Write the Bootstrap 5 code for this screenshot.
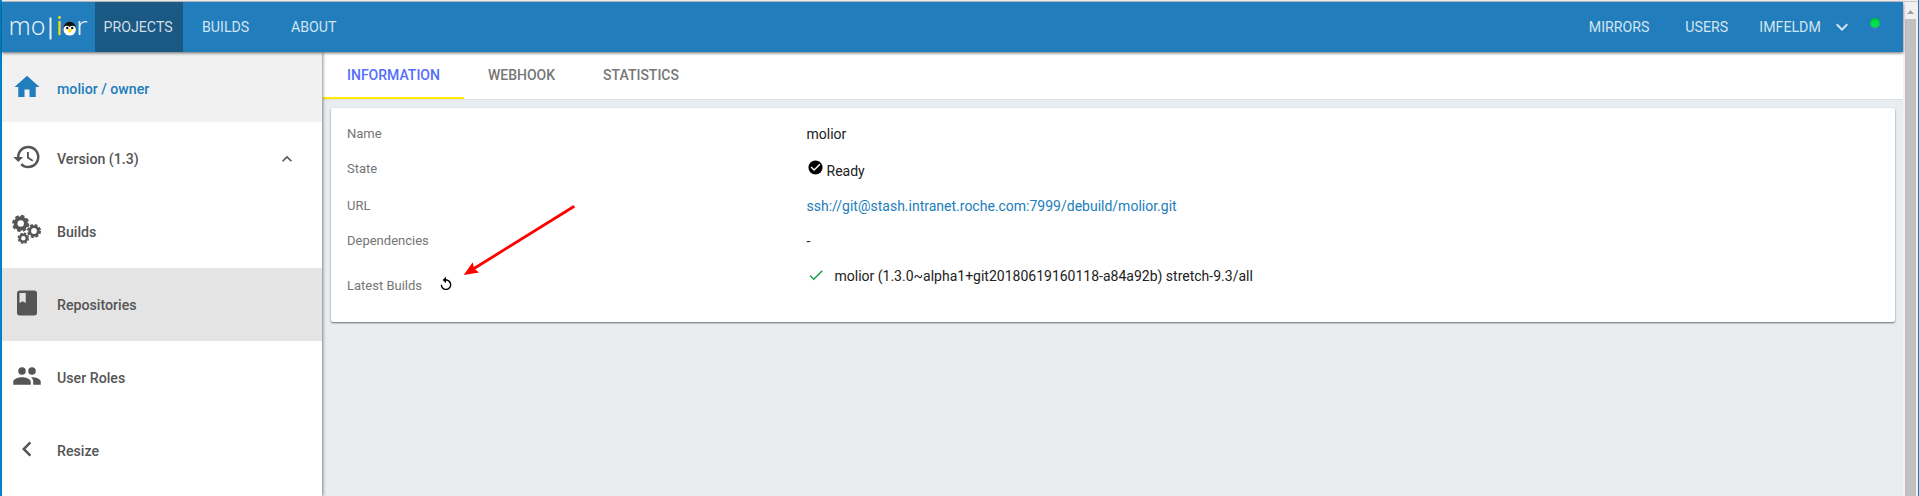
<!DOCTYPE html>
<html lang="en">
<head>
<meta charset="utf-8">
<meta name="viewport" content="width=device-width, initial-scale=1">
<title>molior / owner</title>
<link rel="stylesheet" href="https://cdn.jsdelivr.net/npm/bootstrap@5.3.0/dist/css/bootstrap.min.css">
<style>
  html, body { height: 100%; overflow: hidden; }
  body { font-family: Roboto, "Liberation Sans", sans-serif; font-size: 14px; line-height: 20px; color: #212121; background: #e9edf0; }
  svg { display: block; flex: none; }
  .glyph { fill: currentColor; }
  .app-window { height: 496px; border-left: 2px solid #0288d1; border-right: 1px solid #0a84c1; }
  .top-edge { height: 2px; background: #f1f1f1; border-bottom: 1px solid #c9cdd0; }
  .topbar { height: 50px; background: #217dbb; box-shadow: 0 1px 3px rgba(0,0,0,.6); position: relative; z-index: 3; padding: 0; flex-wrap: nowrap; justify-content: flex-start; }
  .topbar .nav-link { color: #d3e5f1; height: 50px; padding: 15px 0 0; line-height: 20px; font-size: 14.2px; }
  .topbar .nav-link.active { background: #1a5984; color: #d1dee6; }
  .topbar .chevron { margin-top: -2.5px; }
  .brand { width: 93px; height: 50px; }
  .topbar .w-projects { width: 88px; padding-left: 8.5px; }
  .topbar .w-builds { width: 89px; padding-left: 19px; }
  .topbar .w-about { width: 90px; padding-left: 19px; }
  .w-mirrors { width: 96.5px; } .w-users { width: 74px; } .w-account { width: 70.7px; }
  .status-dot { width: 10px; height: 10px; border-radius: 50%; background: #00e04f; margin: 16px 23px 0 16px; box-shadow: 0 2px 3px rgba(90,110,220,.6), inset 0 1px 2px rgba(0,110,0,.5); }
  .sidebar { width: 320px; background: #fff; box-shadow: 1px 0 3px rgba(0,0,0,.45); position: relative; z-index: 2; flex: none; }
  .side-item { height: 73px; padding: 20px 25px 0 10px; color: #555; font-weight: 500; }
  .side-item > span { padding: 7px 0 0 15px; font-size: 14.2px; }
  .side-item .caret { margin: 7px 0 0 auto; }
  .side-item.home { height: 70px; background: #f1f1f1; color: #217dbb; }
  .side-item.selected { background: #e4e4e4; }
  .tabs { height: 48px; background: #fff; border-bottom: 1px solid #dcdee0; padding-left: 1px; }
  .tabs .nav-link { height: 47px; padding: 13px 24px 0; color: #777; font-weight: 500; border-radius: 0; font-size: 14px; line-height: 20px; }
  .tabs .nav-link.active { color: #536dfe; border-bottom: 2px solid #ffea00; }
  .info-card { margin: 8px 8px 0 9px; height: 214px; border: 0; border-radius: 2px; box-shadow: 0 1px 2px rgba(0,0,0,.55); padding: 16px; }
  .info-row { height: 35px; }
  .info-row.state { height: 37px; }
  .info-row dt { width: 459.5px; font-weight: 400; font-size: 13px; color: #757575; flex: none; }
  .info-row dd { margin: 0; color: #212121; }
  .info-row a { color: #217dbb; text-decoration: none; }
  .state .ready { padding: 2px 0 0 3px; }
  .state .glyph, .replay { color: #000; }
  .replay { margin-left: 16px; }
  .latest dt { padding-top: 10px; }
  .done { color: #1aa048; margin-right: 10px; }
  .pointer { position: absolute; left: 133px; top: 98px; overflow: visible; z-index: 4; }
  .scroll-track { width: 15px; background: #f1f1f1; flex: none; padding: 8px 2px 0; }
  .scroll-thumb { width: 11px; background: #c1c1c1; margin-top: 5px; }
</style>
<script src="https://cdn.jsdelivr.net/npm/bootstrap@5.3.0/dist/js/bootstrap.bundle.min.js"></script>
</head>
<body>
<div class="app-window d-flex flex-column">
  <div class="top-edge flex-shrink-0"></div>
  <div class="d-flex flex-grow-1">
    <div class="d-flex flex-column flex-grow-1">
      <nav class="navbar topbar d-flex align-items-start">
        <a class="brand" href="#" aria-label="molior">
          <svg width="93" height="50" font-family="Noto Sans, sans-serif" font-weight="300" font-size="25" fill="#e6eef4">
            <text x="6.500" y="33" textLength="37" lengthAdjust="spacingAndGlyphs">mo</text>
            <rect x="47.500" y="15.500" width="2" height="22"/>
            <text x="54" y="33" fill="#e6dc20" font-weight="400">i</text>
            <text x="74" y="33" textLength="11.500" lengthAdjust="spacingAndGlyphs">r</text>
            <ellipse cx="67.700" cy="26.500" rx="6.300" ry="6.800" fill="#111"/>
            <ellipse cx="67.700" cy="29.500" rx="5.500" ry="4" fill="#fff"/>
            <ellipse cx="64.900" cy="27.500" rx="3.400" ry="3.800" fill="#fff"/>
            <ellipse cx="70.500" cy="27.500" rx="3.400" ry="3.800" fill="#fff"/>
            <circle cx="65.300" cy="26" r="1.200" fill="#111"/>
            <circle cx="70.200" cy="26" r="1.200" fill="#111"/>
            <path d="M65 27.300h5.500l-2.750 3.600z" fill="#fdd400"/>
          </svg>
        </a>
        <a class="nav-link active w-projects" href="#">PROJECTS</a>
        <a class="nav-link w-builds" href="#">BUILDS</a>
        <a class="nav-link w-about" href="#">ABOUT</a>
        <div class="d-flex ms-auto">
          <a class="nav-link w-mirrors" href="#">MIRRORS</a>
          <a class="nav-link w-users" href="#">USERS</a>
          <a class="nav-link d-flex" href="#"><span class="w-account">IMFELDM</span>
            <svg class="glyph chevron" width="24" height="24" viewBox="0 0 24 24"><path d="M16.590 8.590L12 13.170 7.410 8.590 6 10l6 6 6-6z"/></svg></a>
          <span class="status-dot"></span>
        </div>
      </nav>
      <div class="d-flex flex-grow-1">
        <aside class="sidebar d-flex flex-column">
          <a class="side-item home d-flex align-items-start text-decoration-none" href="#">
            <svg class="glyph" width="30" height="30" viewBox="0 0 24 24"><path d="M10 20v-6h4v6h5v-8h3L12 3 2 12h3v8z"/></svg><span>molior / owner</span></a>
          <a class="side-item d-flex align-items-start text-decoration-none" href="#">
            <svg class="glyph" width="30" height="30" viewBox="0 0 24 24"><path d="M13 3a9 9 0 0 0-9 9H1l3.890 3.890.070.140L9 12H6c0-3.870 3.130-7 7-7s7 3.130 7 7-3.130 7-7 7c-1.930 0-3.680-.790-4.940-2.060l-1.420 1.420A8.950 8.950 0 0 0 13 21a9 9 0 0 0 0-18zm-1 5v5l4.280 2.540.720-1.210-3.500-2.080V8z"/></svg><span>Version (1.3)</span>
            <svg class="glyph caret" width="20" height="20" viewBox="0 0 24 24"><path d="M12 8l-6 6 1.410 1.410L12 10.830l4.590 4.580L18 14z"/></svg></a>
          <a class="side-item d-flex align-items-start text-decoration-none" href="#">
            <svg width="30" height="30" viewBox="0 0 30 30" fill="none" stroke="currentColor">
              <circle cx="8.700" cy="8.500" r="5.200" stroke-width="4"/><circle cx="8.700" cy="8.500" r="7.600" stroke-width="2" stroke-dasharray="3.580 2.389"/>
              <circle cx="22" cy="16" r="4.300" stroke-width="2.800"/><circle cx="22" cy="16" r="6.100" stroke-width="1.900" stroke-dasharray="2.870 1.920"/>
              <circle cx="11.300" cy="23.300" r="3.500" stroke-width="2.400"/><circle cx="11.300" cy="23.300" r="5" stroke-width="1.500" stroke-dasharray="2.350 1.577"/>
            </svg><span>Builds</span></a>
          <a class="side-item selected d-flex align-items-start text-decoration-none" href="#">
            <svg class="glyph" width="30" height="30" viewBox="0 0 24 24"><path d="M18 2H6c-1.100 0-2 .9-2 2v16c0 1.100.9 2 2 2h12c1.100 0 2-.9 2-2V4c0-1.100-.9-2-2-2zM6 4h5v8l-2.500-1.500L6 12z"/></svg><span>Repositories</span></a>
          <a class="side-item d-flex align-items-start text-decoration-none" href="#">
            <svg class="glyph" width="30" height="30" viewBox="0 0 24 24"><path d="M16 11a3 3 0 1 0 0-6 3 3 0 0 0 0 6zm-8 0a3 3 0 1 0 0-6 3 3 0 0 0 0 6zm0 2c-2.330 0-7 1.170-7 3.500V19h14v-2.500C15 14.170 10.330 13 8 13zm8 0c-.290 0-.620.020-.970.050C16.190 13.890 17 15.020 17 16.500V19h6v-2.500c0-2.330-4.670-3.500-7-3.500z"/></svg><span>User Roles</span></a>
          <a class="side-item d-flex align-items-start text-decoration-none" href="#">
            <svg class="glyph" width="30" height="30" viewBox="0 0 24 24"><path d="M15.410 7.410L14 6l-6 6 6 6 1.410-1.410L10.830 12z"/></svg><span>Resize</span></a>
        </aside>
        <main class="flex-grow-1">
          <div class="tabs nav">
            <a class="nav-link active" href="#">INFORMATION</a>
            <a class="nav-link" href="#">WEBHOOK</a>
            <a class="nav-link" href="#">STATISTICS</a>
          </div>
          <section class="info-card card">
            <dl class="mb-0">
              <div class="info-row d-flex"><dt>Name</dt><dd>molior</dd></div>
              <div class="info-row state d-flex"><dt>State</dt><dd class="d-flex">
                <svg class="glyph" width="17" height="17" viewBox="0 0 24 24"><path d="M12 2a10 10 0 1 0 0 20 10 10 0 0 0 0-20zm-2 15l-5-5 1.410-1.410L10 14.170l7.590-7.590L19 8z"/></svg><span class="ready">Ready</span></dd></div>
              <div class="info-row d-flex"><dt>URL</dt><dd><a href="#">ssh://git@stash.intranet.roche.com:7999/debuild/molior.git</a></dd></div>
              <div class="info-row d-flex"><dt>Dependencies</dt><dd>-</dd></div>
              <div class="info-row latest d-flex"><dt class="d-flex">Latest Builds
                <svg class="glyph replay" width="16" height="16" viewBox="0 0 24 24"><path d="M12 5V1L7 6l5 5V7c3.310 0 6 2.690 6 6s-2.690 6-6 6-6-2.690-6-6H4c0 4.420 3.580 8 8 8s8-3.580 8-8-3.580-8-8-8z"/></svg></dt>
                <dd class="d-flex"><svg class="glyph done" width="18" height="18" viewBox="0 0 24 24"><path d="M9 16.170L4.830 12l-1.420 1.410L9 19 21 7l-1.410-1.410z"/></svg>molior (1.3.0~alpha1+git20180619160118-a84a92b) stretch-9.3/all</dd></div>
            </dl>
            <svg class="pointer" width="112" height="72" viewBox="464 206 112 72"><path d="M574.300 206.300L474 268.500" stroke="#f00" stroke-width="2.800"/><path d="M463.700 275l9-12.700 1.400 6.300 4.900 3.900z" fill="#f00"/></svg>
          </section>
        </main>
      </div>
    </div>
    <div class="scroll-track d-flex flex-column align-items-center">
      <svg width="7" height="4"><path d="M0 4L3.500 0 7 4z" fill="#a0a0a0"/></svg>
      <div class="scroll-thumb flex-grow-1"></div>
    </div>
  </div>
</div>
</body>
</html>
